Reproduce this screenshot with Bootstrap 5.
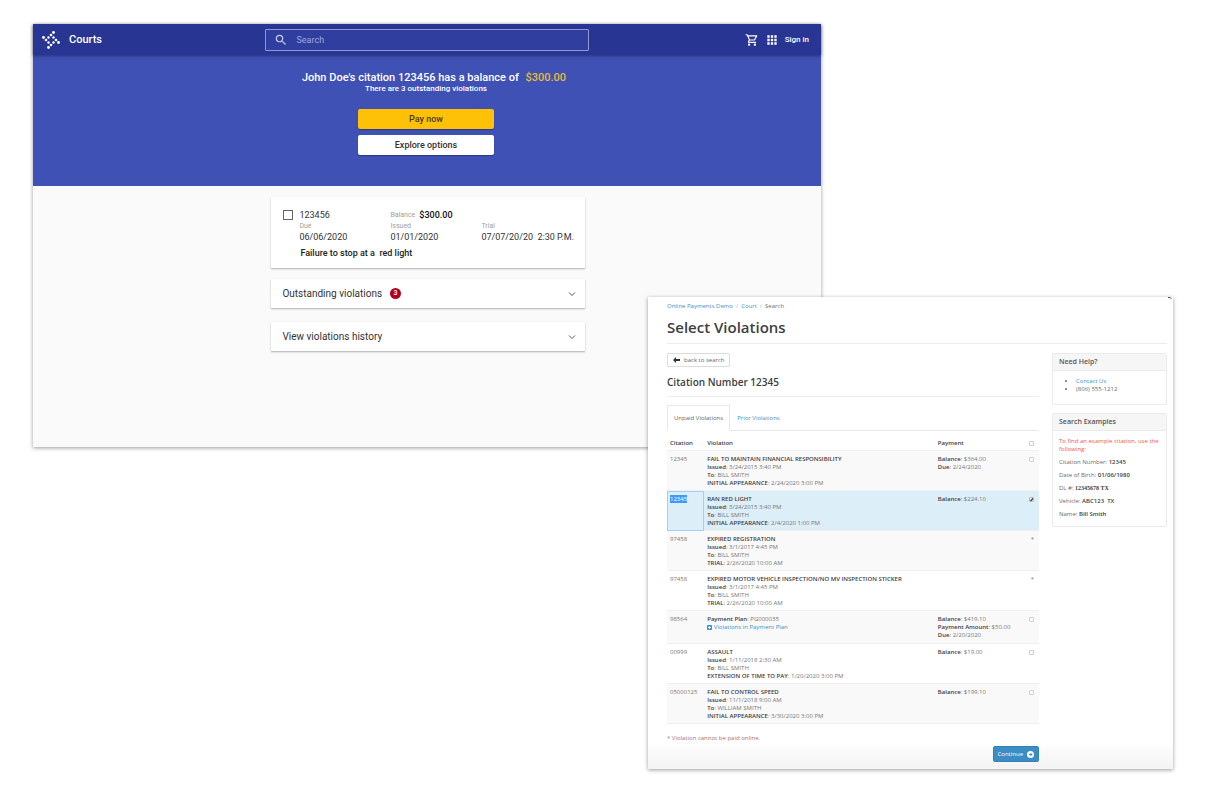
<!DOCTYPE html>
<html lang="en">
<head>
<meta charset="utf-8">
<meta name="viewport" content="width=device-width, initial-scale=1">
<title>Courts – citations and violations</title>
<link href="https://cdn.jsdelivr.net/npm/bootstrap@5.3.0/dist/css/bootstrap.min.css" rel="stylesheet">
<script src="https://cdn.jsdelivr.net/npm/bootstrap@5.3.0/dist/js/bootstrap.bundle.min.js"></script>
<style>
  :root { --navy: #283593; --indigo: #3f51b5; --amber: #ffc107; --sky: #3f8fc6; --ink: #3c4043; --rule: #ececec; }
  body { background: #fff; }
  .stage { display: grid; grid-template-columns: 33fr 615fr 173fr 352fr 33fr; grid-template-rows: 273px auto auto; padding: 24px 0 18px; }
  .pane { box-shadow: 0 1px 4px rgba(0,0,0,.4); }

  /* Courts window */
  .courts { grid-column: 2 / 4; grid-row: 1 / 3; height: 423px; background: #fafafa; font: 9px/12px Roboto, "Liberation Sans", sans-serif; color: #333; }
  .topbar { display: grid; grid-template-columns: 1fr 41% 1fr; align-items: center; height: 31px; background: var(--navy); color: #fff; box-shadow: 0 1px 3px rgba(20,25,80,.55); position: relative; }
  .topbar a { color: #fff; text-decoration: none; font-weight: 500; }
  .brand-name { font-size: 11px; }
  .account { gap: 6px; padding-right: 12px; }
  .signin { font-size: 8px; }
  .searchbox { height: 22px; border: 1px solid #8f98d0; border-radius: 1px; background: #303f9f; }
  .searchbox input { background: none; border: 0; outline: 0; color: #fff; font-size: 9px; padding: 0; }
  .searchbox input::placeholder { color: #9fa8da; opacity: 1; }
  .hero { height: 131px; background: var(--indigo); color: #fff; font-weight: 500; padding: 16px 2px 0 0; }
  .hero h1 { font-size: 11px; line-height: 13px; margin: 0; font-weight: 500; }
  .hero .due-sum { color: #e9b93c; margin-left: 4px; }
  .hero p { font-size: 8px; line-height: 10px; margin: 0 0 15px; }
  .hero-actions { gap: 6px; }
  .btn-act { width: 136px; height: 20px; padding: 0; border: 0; border-radius: 2px; font-size: 9px; line-height: 20px; font-weight: 500; color: #333; background: #fff; box-shadow: 0 1px 1px rgba(0,0,0,.3); }
  .btn-pay { background: var(--amber); color: #4a3a10; }
  .sheet-list { width: 40%; margin: 11px auto 0; padding-left: 2px; }
  .sheet { background: #fff; border-radius: 1px; box-shadow: 0 1px 2px rgba(0,0,0,.3); }
  .cite { padding: 12px 10px 9px 12px; }
  .cite-grid { display: grid; grid-template-columns: 16px 91px 91px 1fr; }
  .cite small { display: block; font-size: 7px; line-height: 10px; color: #a0a0a0; }
  .cite input { appearance: none; width: 10px; height: 10px; border: 1px solid #666; margin: 1px 0 0; }
  .cite strong { font-weight: 500; color: #111; }
  .cite-name { padding-left: 17px; font-weight: 500; color: #222; margin-top: 4px; line-height: 12px; }
  .fold { height: 29px; padding: 0 9px 0 11px; border: 0; font-size: 10px; color: #333; margin-top: 11px; }
  .fold + .fold { margin-top: 14px; }
  .count { width: 11px; height: 11px; border-radius: 50%; background: #b00020; color: #fff; font-size: 7px; line-height: 11px; font-weight: 500; text-align: center; }

  /* Violations window */
  .violations { grid-column: 3 / 5; grid-row: 2 / 4; position: relative; background: linear-gradient(#fff 94%, #f3f3f3); padding: 4px 6px 7px 19px; font: 6px/8px "Open Sans", "Noto Sans", sans-serif; color: #6b6b6b; }
  .violations a { color: var(--sky); text-decoration: none; }
  .violations b, .violations th { font-weight: 600; color: var(--ink); }
  .corner { position: absolute; top: 0; right: 1px; width: 4px; height: 3px; }
  .crumbs { --bs-breadcrumb-item-padding-x: 3px; --bs-breadcrumb-divider-color: #bbb; font-size: 6px; line-height: 10px; margin: 0; }
  .violations h1 { font-size: 15px; line-height: 20px; font-weight: 600; color: var(--ink); margin: 6px 0; }
  .ruled { border-bottom: 1px solid var(--rule); }
  .violations h2 { font-size: 10px; line-height: 14px; font-weight: 600; color: var(--ink); margin: 0; padding: 8px 0 7px; }
  .cols { gap: 13px; padding-top: 9px; }
  .btn-back { font-size: 6px; line-height: 8px; padding: 2px 5px; border: 1px solid #ddd; border-radius: 1px; color: #666; background: #fff; }
  .tabs { --bs-nav-tabs-border-color: #e8e8e8; --bs-nav-tabs-border-radius: 1px; margin-top: 8px; }
  .tabs .nav-link { font-size: 6px; line-height: 8px; padding: 8px 6px; border-radius: 1px 1px 0 0; }
  .tabs .nav-link.active { color: #666; border-color: #e8e8e8 #e8e8e8 #fff; }
  .grid-table { margin: 0; font-size: 6px; line-height: 8px; --bs-table-striped-bg: #f9f9f9; --bs-table-bg: transparent; --bs-table-color: #777; --bs-table-striped-color: #777; border-color: #f0f0f0; table-layout: fixed; }
  .grid-table > :not(caption) > * > * { padding: 4px 3px 3px; }
  .grid-table thead th { padding: 8px 3px 3px; }
  .grid-table tbody { border-top: 1px solid #f0f0f0; }
  .grid-table tr > :last-child { text-align: right; padding-right: 5px; }
  .grid-table tbody tr { height: 40px; }
  .grid-table tbody tr.brief { height: 33px; }
  .grid-table tr.picked > td { background: #dceef8; box-shadow: none; }
  .grid-table tr.picked > td:first-child { outline: 1px solid #a5cdf6; outline-offset: -1px; }
  .grid-table .hit { background: #3c9bfb; color: #fff; }
  .tick { appearance: none; display: inline-block; vertical-align: top; width: 5px; height: 5px; margin: 2px 0 0; border: 1px solid #cfcfcf; border-radius: 1px; background: #fafafa; }
  .tick:checked { background: linear-gradient(135deg, #eee 35%, #555 35%, #555 70%, #ddd 70%); border-color: #b5bcc2; }
  .note { color: #b0716b; margin: 10px 0 4px; }
  .btn-go { background: #3b8dc4; color: #fff; font-size: 6px; line-height: 8px; padding: 3px 4px; border-radius: 2px; border: 1px solid #3580b5; }
  .side { width: 23%; }
  .box { border: 1px solid #ebebeb; border-radius: 2px; background: #fff; }
  .box h3 { font-size: 7px; line-height: 9px; font-weight: 600; color: #555; margin: 0; padding: 3px 6px 4px; background: #f6f6f6; border-bottom: 1px solid #ebebeb; }
  .box .inner { padding: 6px 2px 3px 6px; }
  .box p { margin: 0 0 5px; }
  .box ul { padding-left: 17px; margin: 0 0 8px; }
  .alert-line { color: #f4574f; }
  .serif { font-family: "Liberation Serif", serif; }
</style>
</head>
<body>
<main class="stage">

  <section class="courts pane" aria-label="Courts">
    <header class="topbar">
      <a href="#" class="d-flex align-items-center gap-2 ps-2">
        <svg width="20" height="20" viewBox="12 12 60 60" fill="#fff" aria-hidden="true">
          <g id="arm"><circle cx="49.500" cy="19.500" r="4.300"/><circle cx="42" cy="27" r="4"/><circle cx="34.500" cy="34.500" r="3.600"/></g>
          <use href="#arm" transform="rotate(90 42 42)"/>
          <use href="#arm" transform="rotate(180 42 42)"/>
          <use href="#arm" transform="rotate(270 42 42)"/>
        </svg>
        <span class="brand-name">Courts</span>
      </a>
      <div class="searchbox d-flex align-items-center">
        <svg class="mx-2" width="14" height="14" viewBox="0 0 24 24" fill="#c5cae9" aria-hidden="true"><path d="M15.500 14h-.79l-.28-.27A6.470 6.470 0 0 0 16 9.500 6.500 6.500 0 1 0 9.500 16c1.610 0 3.090-.59 4.230-1.570l.27.28v.79l5 4.990L20.490 19l-4.990-5zm-6 0C7.010 14 5 11.990 5 9.500S7.010 5 9.500 5 14 7.010 14 9.500 11.990 14 9.500 14z"/></svg>
        <input class="flex-grow-1" type="search" placeholder="Search" aria-label="Search">
      </div>
      <nav class="account d-flex align-items-center justify-content-end" aria-label="Account">
        <a href="#" class="d-flex" aria-label="Cart"><svg width="14" height="14" viewBox="0 0 24 24" fill="#fff"><path d="M15.550 13c.75 0 1.410-.41 1.750-1.030l3.580-6.490A.996.996 0 0 0 20.010 4H5.210l-.94-2H1v2h2l3.600 7.590-1.350 2.440C4.520 15.370 5.480 17 7 17h12v-2H7l1.100-2h7.450zM6.160 6h12.150l-2.760 5H8.530L6.160 6zM7 18c-1.100 0-1.990.9-1.990 2S5.900 22 7 22s2-.9 2-2-.9-2-2-2zm10 0c-1.100 0-1.990.9-1.990 2s.89 2 1.990 2 2-.9 2-2-.9-2-2-2z"/></svg></a>
        <a href="#" class="d-flex" aria-label="Apps"><svg width="14" height="14" viewBox="0 0 24 24" fill="#fff"><path d="M4 8h4V4H4v4zm6 12h4v-4h-4v4zm-6 0h4v-4H4v4zm0-6h4v-4H4v4zm6 0h4v-4h-4v4zm6-10v4h4V4h-4zm-6 4h4V4h-4v4zm6 6h4v-4h-4v4zm0 6h4v-4h-4v4z"/></svg></a>
        <a href="#" class="signin">Sign in</a>
      </nav>
    </header>

    <div class="hero d-flex flex-column align-items-center">
      <h1 class="ps-3">John Doe's citation 123456 has a balance of <span class="due-sum">$300.00</span></h1>
      <p>There are 3 outstanding violations</p>
      <div class="hero-actions d-flex flex-column">
        <button type="button" class="btn btn-act btn-pay">Pay now</button>
        <button type="button" class="btn btn-act">Explore options</button>
      </div>
    </div>

    <div class="sheet-list">
      <article class="sheet cite">
        <div class="cite-grid">
          <input type="checkbox" id="cite1">
          <div><label for="cite1" class="d-block">123456</label><small>Due</small>06/06/2020</div>
          <div><div class="d-flex align-items-center gap-1"><small>Balance</small><strong>$300.00</strong></div><small>Issued</small>01/01/2020</div>
          <div class="align-self-end"><small>Trial</small>07/07/20/20&nbsp; 2:30 P.M.</div>
        </div>
        <div class="cite-name">Failure to stop at a&nbsp; red light</div>
      </article>
      <button type="button" class="sheet fold w-100 d-flex align-items-center">
        Outstanding violations <span class="count ms-2">3</span>
        <svg class="ms-auto" width="8" height="8" viewBox="0 0 8 8" fill="none" stroke="#555"><path d="M1 2.500 4 5.500 7 2.500"/></svg>
      </button>
      <button type="button" class="sheet fold w-100 d-flex align-items-center">
        View violations history
        <svg class="ms-auto" width="8" height="8" viewBox="0 0 8 8" fill="none" stroke="#555"><path d="M1 2.500 4 5.500 7 2.500"/></svg>
      </button>
    </div>
  </section>

  <section class="violations pane" aria-label="Select Violations">
    <svg class="corner" viewBox="0 0 4 3" fill="#555" aria-hidden="true"><path d="M0 0h2l2 2H3L2 1H0z"/></svg>
    <nav aria-label="breadcrumb">
      <ol class="breadcrumb crumbs">
        <li class="breadcrumb-item"><a href="#">Online Payments Demo</a></li>
        <li class="breadcrumb-item"><a href="#">Court</a></li>
        <li class="breadcrumb-item">Search</li>
      </ol>
    </nav>
    <h1>Select Violations</h1>
    <div class="ruled"></div>
    <div class="cols d-flex align-items-start">
      <div class="flex-grow-1">
        <button type="button" class="btn btn-back d-flex align-items-center gap-1"><svg width="7" height="6" viewBox="0 0 7 6" fill="#333" aria-hidden="true"><path d="M0 3 3 0v2h4v2H3v2z"/></svg>back to search</button>
        <h2 class="ruled">Citation Number 12345</h2>
        <ul class="nav nav-tabs tabs">
          <li class="nav-item"><a class="nav-link active" href="#">Unpaid Violations</a></li>
          <li class="nav-item"><a class="nav-link" href="#">Prior Violations</a></li>
        </ul>
        <table class="table table-striped grid-table">
          <colgroup><col style="width:10%"><col style="width:62%"><col style="width:23%"><col style="width:5%"></colgroup>
          <thead><tr><th scope="col">Citation</th><th scope="col">Violation</th><th scope="col">Payment</th><th><input class="tick" type="checkbox" aria-label="Select all"></th></tr></thead>
          <tbody>
            <tr><td>12345</td><td><b>FAIL TO MAINTAIN FINANCIAL RESPONSIBILITY</b><br><b>Issued</b>: 3/24/2015 3:40 PM<br><b>To</b>: BILL SMITH<br><b>INITIAL APPEARANCE</b>: 2/24/2020 3:00 PM</td><td><b>Balance</b>: $364.00<br><b>Due</b>: 2/24/2020</td><td><input class="tick" type="checkbox" aria-label="Fail to maintain financial responsibility"></td></tr>
            <tr class="picked"><td><span class="hit">12345</span></td><td><b>RAN RED LIGHT</b><br><b>Issued</b>: 3/24/2015 3:40 PM<br><b>To</b>: BILL SMITH<br><b>INITIAL APPEARANCE</b>: 2/4/2020 1:00 PM</td><td><b>Balance</b>: $224.10</td><td><input class="tick" type="checkbox" checked aria-label="Ran red light"></td></tr>
            <tr><td>97458</td><td><b>EXPIRED REGISTRATION</b><br><b>Issued</b>: 3/1/2017 4:45 PM<br><b>To</b>: BILL SMITH<br><b>TRIAL</b>: 2/26/2020 10:00 AM</td><td></td><td>*</td></tr>
            <tr><td>97458</td><td><b>EXPIRED MOTOR VEHICLE INSPECTION/NO MV INSPECTION STICKER</b><br><b>Issued</b>: 3/1/2017 4:45 PM<br><b>To</b>: BILL SMITH<br><b>TRIAL</b>: 2/26/2020 10:00 AM</td><td></td><td>*</td></tr>
            <tr class="brief"><td>98564</td><td><b>Payment Plan</b>: PG000035<br><a href="#"><svg width="5" height="5" viewBox="0 0 5 5" aria-hidden="true"><rect width="5" height="5" rx="1" fill="#3f8fc6"/><path d="M1 2.500h3M2.500 1v3" stroke="#fff"/></svg> Violations in Payment Plan</a></td><td><b>Balance</b>: $419.10<br><b>Payment Amount</b>: $50.00<br><b>Due</b>: 2/20/2020</td><td><input class="tick" type="checkbox" aria-label="Payment plan PG000035"></td></tr>
            <tr><td>00999</td><td><b>ASSAULT</b><br><b>Issued</b>: 1/11/2018 2:30 AM<br><b>To</b>: BILL SMITH<br><b>EXTENSION OF TIME TO PAY</b>: 1/20/2020 3:00 PM</td><td><b>Balance</b>: $19.00</td><td><input class="tick" type="checkbox" aria-label="Assault"></td></tr>
            <tr><td>05000125</td><td><b>FAIL TO CONTROL SPEED</b><br><b>Issued</b>: 11/1/2018 9:00 AM<br><b>To</b>: WILLIAM SMITH<br><b>INITIAL APPEARANCE</b>: 3/30/2020 3:00 PM</td><td><b>Balance</b>: $199.10</td><td><input class="tick" type="checkbox" aria-label="Fail to control speed"></td></tr>
          </tbody>
        </table>
        <p class="note">* Violation cannot be paid online.</p>
        <button type="button" class="btn btn-go d-flex align-items-center gap-1 ms-auto">Continue <svg width="7" height="7" viewBox="0 0 7 7" aria-hidden="true"><circle cx="3.500" cy="3.500" r="3.500" fill="#fff"/><path d="M2 3.500h3M3.500 2 5 3.500 3.500 5" fill="none" stroke="#3b8dc4"/></svg></button>
      </div>

      <aside class="side flex-shrink-0">
        <div class="box">
          <h3>Need Help?</h3>
          <div class="inner"><ul><li><a href="#">Contact Us</a></li><li>(806) 555-1212</li></ul></div>
        </div>
        <div class="box mt-2">
          <h3>Search Examples</h3>
          <div class="inner">
            <p class="alert-line">To find an example citation, use the following:</p>
            <p>Citation Number: <b>12345</b></p>
            <p>Date of Birth: <b>01/06/1980</b></p>
            <p>DL #: <b class="serif">12345678 TX</b></p>
            <p>Vehicle: <b>ABC123&nbsp; TX</b></p>
            <p>Name: <b>Bill Smith</b></p>
          </div>
        </div>
      </aside>
    </div>
  </section>
</main>
</body>
</html>
